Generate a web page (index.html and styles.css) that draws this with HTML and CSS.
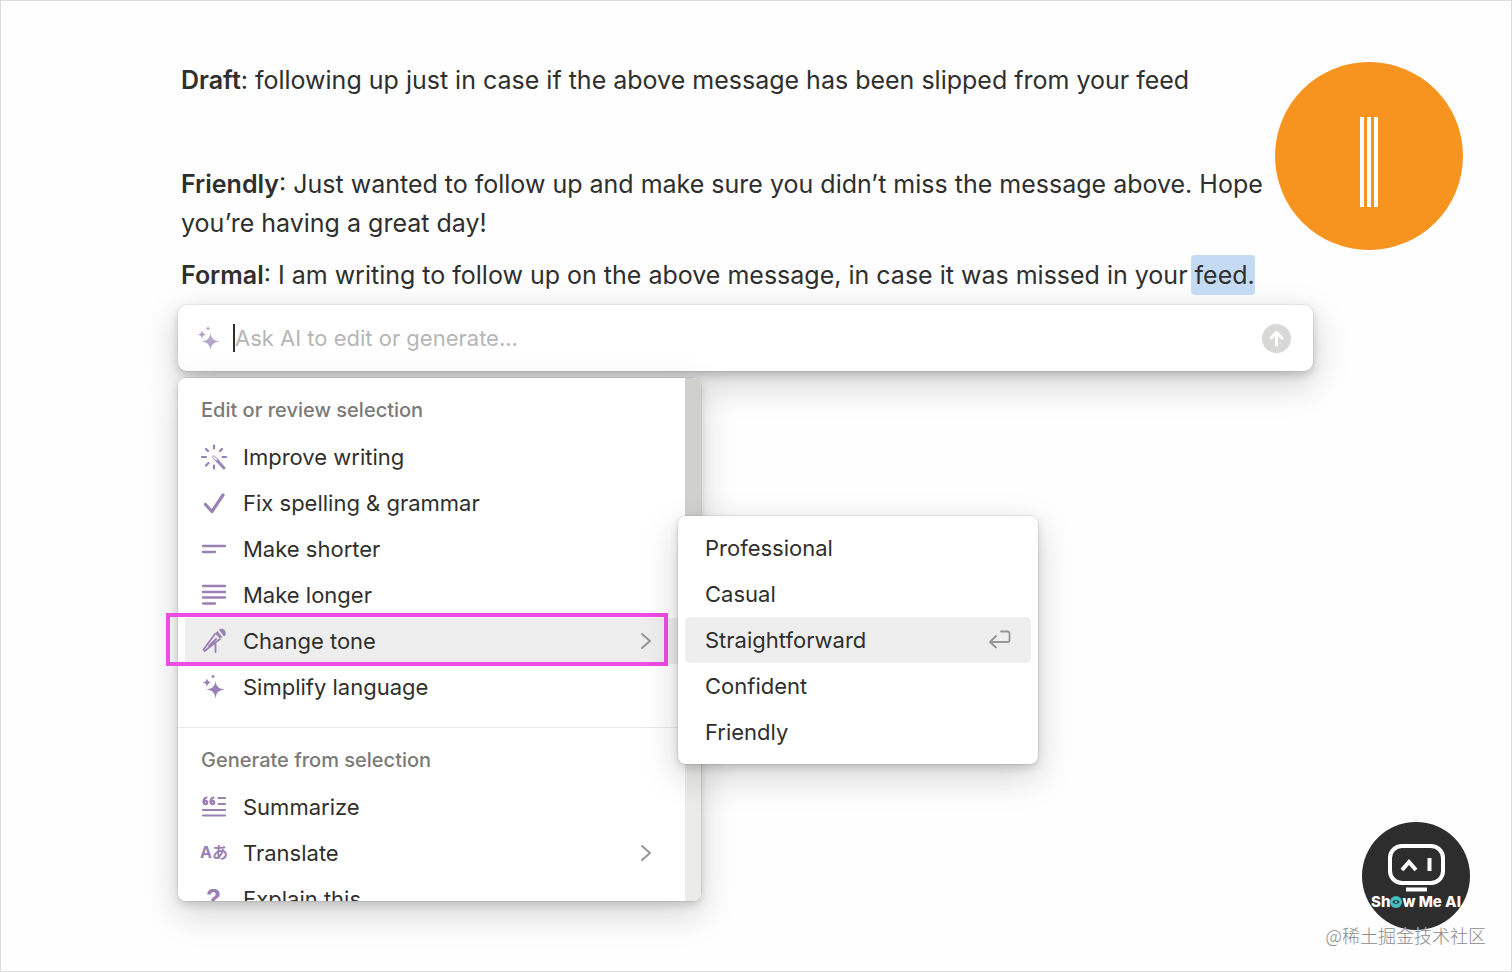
FILE: index.html
```html
<!DOCTYPE html>
<html lang="en">
<head>
  <meta charset="UTF-8" />
  <meta name="viewport" content="width=device-width, initial-scale=1.0" />
  <title>Ask AI</title>
  <link rel="stylesheet" href="styles.css">
</head>
<body>
  <svg class="defs" width="0" height="0" aria-hidden="true">
    <symbol id="sparkles" viewBox="0 0 27 27">
      <path d="M15.500 8c.9 5.500 2.500 7.300 9 8.500-6.500 1.200-8.100 3-9 9-.9-6-2.500-7.800-9-9 6.500-1.200 8.100-3 9-8.500z"/>
      <path d="M7 5c.5 2.900 1.400 3.800 4.400 4.500C8.400 10.200 7.500 11 7 14c-.5-3-1.400-3.800-4.400-4.500C5.600 8.800 6.500 7.900 7 5z"/>
      <path d="M13 1c.4 1.600.8 2 2.400 2.400-1.600.4-2 .8-2.400 2.400-.4-1.600-.8-2-2.400-2.400 1.600-.4 2-.8 2.400-2.400z"/>
    </symbol>
    <symbol id="chevron" viewBox="0 0 12 18">
      <path d="M2 2l8 7-8 7" fill="none" stroke="currentColor" stroke-width="2" stroke-linecap="round" stroke-linejoin="round"/>
    </symbol>
  </svg>

  <main class="page">
    <article class="doc">
      <p><b>Draft</b>: following up just in case if the above message has been slipped from your feed</p>
      <p>&nbsp;</p>
      <p><b>Friendly</b>: Just wanted to follow up and make sure you didn’t miss the message above. Hope you’re having a great day!</p>
      <p><b>Formal</b>: I am writing to follow up on the above message, in case it was missed in your <mark>feed.</mark></p>
    </article>

    <form class="ask" onsubmit="return false">
      <svg class="icon"><use href="#sparkles"/></svg>
      <span class="caret"></span>
      <input type="text" aria-label="Ask AI" placeholder="Ask AI to edit or generate...">
      <button class="send" aria-label="Send">
        <svg width="29" height="29" viewBox="0 0 29 29"><path d="M14.500 21V9M9 14l5.500-5.500L20 14" fill="none" stroke="#fff" stroke-width="3" stroke-linecap="round" stroke-linejoin="round"/></svg>
      </button>
    </form>

    <div class="menu-wrap">
      <div class="menu">
        <div class="menu-list">
          <section class="group">
            <h2>Edit or review selection</h2>
            <button class="item">
              <svg class="icon" viewBox="0 0 27 27" fill="none" stroke="currentColor" stroke-width="2.200" stroke-linecap="round">
                <path d="M14 2.500v3M14 22.500v3M2 14h4M22.500 14h3.500M6 6l2 2M22 6l-2 2M6 22.500l2.500-2.500"/>
                <path d="M17.500 18l6.500 7" stroke-width="2.800"/>
                <path d="M12.500 14l1.500-1.500 4.500 4.500-1.500 1.500z" stroke-width="1"/>
              </svg>
              Improve writing
            </button>
            <button class="item">
              <svg class="icon" viewBox="0 0 27 27" fill="none" stroke="currentColor" stroke-width="3.200" stroke-linecap="round" stroke-linejoin="round"><path d="M5.500 15.500l6.500 7L23 6"/></svg>
              Fix spelling &amp; grammar
            </button>
            <button class="item">
              <svg class="icon" viewBox="0 0 27 27" fill="none" stroke="currentColor" stroke-width="2.300" stroke-linecap="round"><path d="M3 11h22M3 17h12"/></svg>
              Make shorter
            </button>
            <button class="item">
              <svg class="icon" viewBox="0 0 27 27" fill="none" stroke="currentColor" stroke-width="2.300" stroke-linecap="round"><path d="M3 5h22M3 11h22M3 16.500h22M3 22.500h12"/></svg>
              Make longer
            </button>
            <button class="item active">
              <svg class="icon" viewBox="0 0 27 27">
                <path d="M19 2.800c3-2.800 8.300 1.200 6.300 5.700l-1.300 1z"/>
                <path d="M17.500 4l5 6.500-3 .5-4.500-4.500z"/>
                <path d="M15 7L3.500 22.500l1 1.500L20 12M9 19l7-7M15.500 17v8" fill="none" stroke="currentColor" stroke-width="1.800" stroke-linecap="round" stroke-linejoin="round"/>
              </svg>
              Change tone
              <svg class="chevron"><use href="#chevron"/></svg>
            </button>
            <button class="item">
              <svg class="icon"><use href="#sparkles"/></svg>
              Simplify language
            </button>
          </section>
          <section class="group">
            <h2>Generate from selection</h2>
            <button class="item">
              <svg class="icon" viewBox="0 0 27 27" fill="none" stroke="currentColor" stroke-width="2.200" stroke-linecap="round">
                <path d="M18.500 5h6.500M18.500 11h6.500M3 17h22M3 22.500h22"/>
                <circle cx="5.500" cy="9.500" r="1.700"/><path d="M3.500 9c0-2.500 1-4 3-4.500"/>
                <circle cx="12.500" cy="9.500" r="1.700"/><path d="M10.500 9c0-2.500 1-4 3-4.500"/>
              </svg>
              Summarize
            </button>
            <button class="item">
              <span class="icon glyph-translate" aria-hidden="true">Aあ</span>
              Translate
              <svg class="chevron"><use href="#chevron"/></svg>
            </button>
            <button class="item">
              <span class="icon glyph-help" aria-hidden="true">?</span>
              Explain this
            </button>
          </section>
        </div>
        <div class="scrollbar"><div class="thumb"></div></div>
      </div>

      <div class="outline"></div>

      <div class="submenu">
        <button class="item">Professional</button>
        <button class="item">Casual</button>
        <button class="item active">
          Straightforward
          <svg class="enter" width="23" height="20" viewBox="0 0 23 20" fill="none" stroke="currentColor" stroke-width="1.800" stroke-linecap="round" stroke-linejoin="round"><path d="M13 1.500h6.500q2 0 2 2v6.500q0 2-2 2H2M8 6l-6 6 6 5.500"/></svg>
        </button>
        <button class="item">Confident</button>
        <button class="item">Friendly</button>
      </div>
    </div>

    <div class="badge"><i></i><i></i><i></i></div>

    <div class="brand">
      <svg width="108" height="108" viewBox="0 0 108 108">
        <circle cx="54" cy="54" r="54" fill="#2d2d2d"/>
        <rect x="28" y="24" width="53" height="37" rx="12" fill="none" stroke="#fff" stroke-width="4"/>
        <path d="M40 48l7-8 7 8" fill="none" stroke="#fff" stroke-width="4"/>
        <path d="M67.500 36v13M44 67.500h21" stroke="#fff" stroke-width="4"/>
      </svg>
      <div class="brand-name">Sh<svg width="12" height="12" viewBox="0 0 12 12"><circle cx="6" cy="6" r="6" fill="#45bfc0"/><path d="M2 6q4-4 8 0-4 4-8 0z" fill="#244b50"/><circle cx="6" cy="6" r="1" fill="#7fe0e0"/></svg>w Me AI</div>
    </div>
    <div class="watermark">@稀土掘金技术社区</div>
  </main>
</body>
</html>
```
FILE: styles.css
```css
* {
  box-sizing: border-box;
}
body {
  margin: 0;
  font-family: Inter, "Noto Sans CJK SC", sans-serif;
  color: #2f2f2d;
  background: #fefefe;
}
.defs {
  position: absolute;
}
.page {
  position: relative;
  min-height: 100vh;
  padding: 60px 198px 70px 177px;
  border: 1px solid #dcdcdc;
  overflow: hidden;
}
.doc {
  padding-left: 3px;
  font-size: 25px;
  line-height: 39px;
}
.doc p {
  margin: 0 0 13px;
}
.doc p:last-child {
  margin-bottom: 10px;
}
.doc b {
  font-weight: 600;
}
mark {
  padding: 5px 0 5px 4px;
  margin-left: -4px;
  border-radius: 4px;
  color: inherit;
  background: #c4dbf3;
}

/* prompt bar */
.ask {
  display: flex;
  align-items: center;
  height: 66px;
  padding: 0 22px 0 17px;
  background: #fff;
  border-radius: 9px;
  box-shadow: 0 0 0 1px rgba(15, 15, 15, 0.05), 0 4px 8px rgba(15, 15, 15, 0.18), 0 12px 36px rgba(15, 15, 15, 0.2);
}
.icon {
  flex: none;
  width: 27px;
  height: 27px;
  color: #9a80b4;
  fill: currentColor;
}
.icon[fill="none"] {
  fill: none;
}
.ask .icon {
  color: #b7a5cb;
}
.caret {
  width: 2px;
  height: 28px;
  margin-left: 11px;
  background: #2f2f2d;
}
.ask input {
  flex: 1;
  min-width: 0;
  padding: 0;
  border: none;
  outline: none;
  font: 22px Inter, sans-serif;
  background: none;
}
.ask input::placeholder {
  color: #b6b6b4;
}
.send {
  width: 29px;
  height: 29px;
  padding: 0;
  border: none;
  border-radius: 50%;
  background: #d8d8d6;
}
.send svg {
  display: block;
}

/* dropdown menu */
.menu-wrap {
  position: relative;
  width: 523px;
  margin-top: 7px;
}
.menu {
  display: flex;
  height: 523px;
  border-radius: 8px;
  overflow: hidden;
  background: #fff;
}
.menu-wrap,
.submenu {
  border-radius: 8px;
  box-shadow: 0 0 0 1px rgba(15, 15, 15, 0.07), 0 4px 8px rgba(15, 15, 15, 0.15), 0 12px 36px rgba(15, 15, 15, 0.18);
}
.menu-list {
  flex: 1;
}
.group {
  padding: 20px 0 17px;
}
.group + .group {
  border-top: 1px solid #e8e8e7;
}
.group h2 {
  margin: 0 0 12px;
  padding-left: 23px;
  font-size: 20px;
  font-weight: 500;
  line-height: 24px;
  color: #7b7a77;
}
.item {
  display: flex;
  align-items: center;
  gap: 16px;
  width: 100%;
  height: 46px;
  padding: 0 33px 0 22px;
  border: none;
  border-radius: 5px;
  font: 22px Inter, sans-serif;
  color: inherit;
  text-align: left;
  background: none;
}
.item .icon {
  margin-bottom: 2px;
}
.item.active {
  background: #eee;
}
.menu .item.active {
  background: linear-gradient(to right, #fff 7px, #eee 7px);
}
.chevron {
  width: 12px;
  height: 18px;
  margin-left: auto;
  color: #969694;
}
.glyph-translate {
  font: 700 16px/27px Inter, "Noto Sans CJK JP", sans-serif;
  white-space: nowrap;
}
.glyph-help {
  font: 700 26px/27px Inter, sans-serif;
  text-align: center;
}
.scrollbar {
  width: 16px;
  background: #ebebe8;
}
.thumb {
  height: 50%;
  background: #d0d0cc;
}
.outline {
  position: absolute;
  top: 235px;
  left: -12px;
  width: 502px;
  height: 53px;
  border: 4px solid #f04ce6;
}
.submenu {
  position: absolute;
  top: 138px;
  left: 500px;
  width: 360px;
  padding: 9px 7px;
  background: #fff;
}
.submenu .item {
  padding: 0 20px;
}
.enter {
  margin-left: auto;
  color: #969694;
}

/* corner marks */
.badge {
  position: absolute;
  top: 61px;
  right: 48px;
  display: flex;
  align-items: center;
  justify-content: center;
  gap: 3px;
  width: 188px;
  height: 188px;
  padding-top: 12px;
  border-radius: 50%;
  background: #f79420;
}
.badge i {
  width: 4px;
  height: 90px;
  background: #fff;
}
.brand {
  position: absolute;
  right: 41px;
  bottom: 41px;
}
.brand svg {
  display: block;
}
.brand-name {
  position: absolute;
  top: 71px;
  left: 9px;
  display: flex;
  align-items: center;
  font-size: 15px;
  font-weight: 800;
  line-height: 18px;
  white-space: pre;
  color: #fff;
}
.watermark {
  position: absolute;
  right: 25px;
  bottom: 23px;
  font: 300 18px/26px "Noto Sans CJK SC", sans-serif;
  color: #8a8a8a;
  text-shadow: 0 0 1px #fff;
}
```
